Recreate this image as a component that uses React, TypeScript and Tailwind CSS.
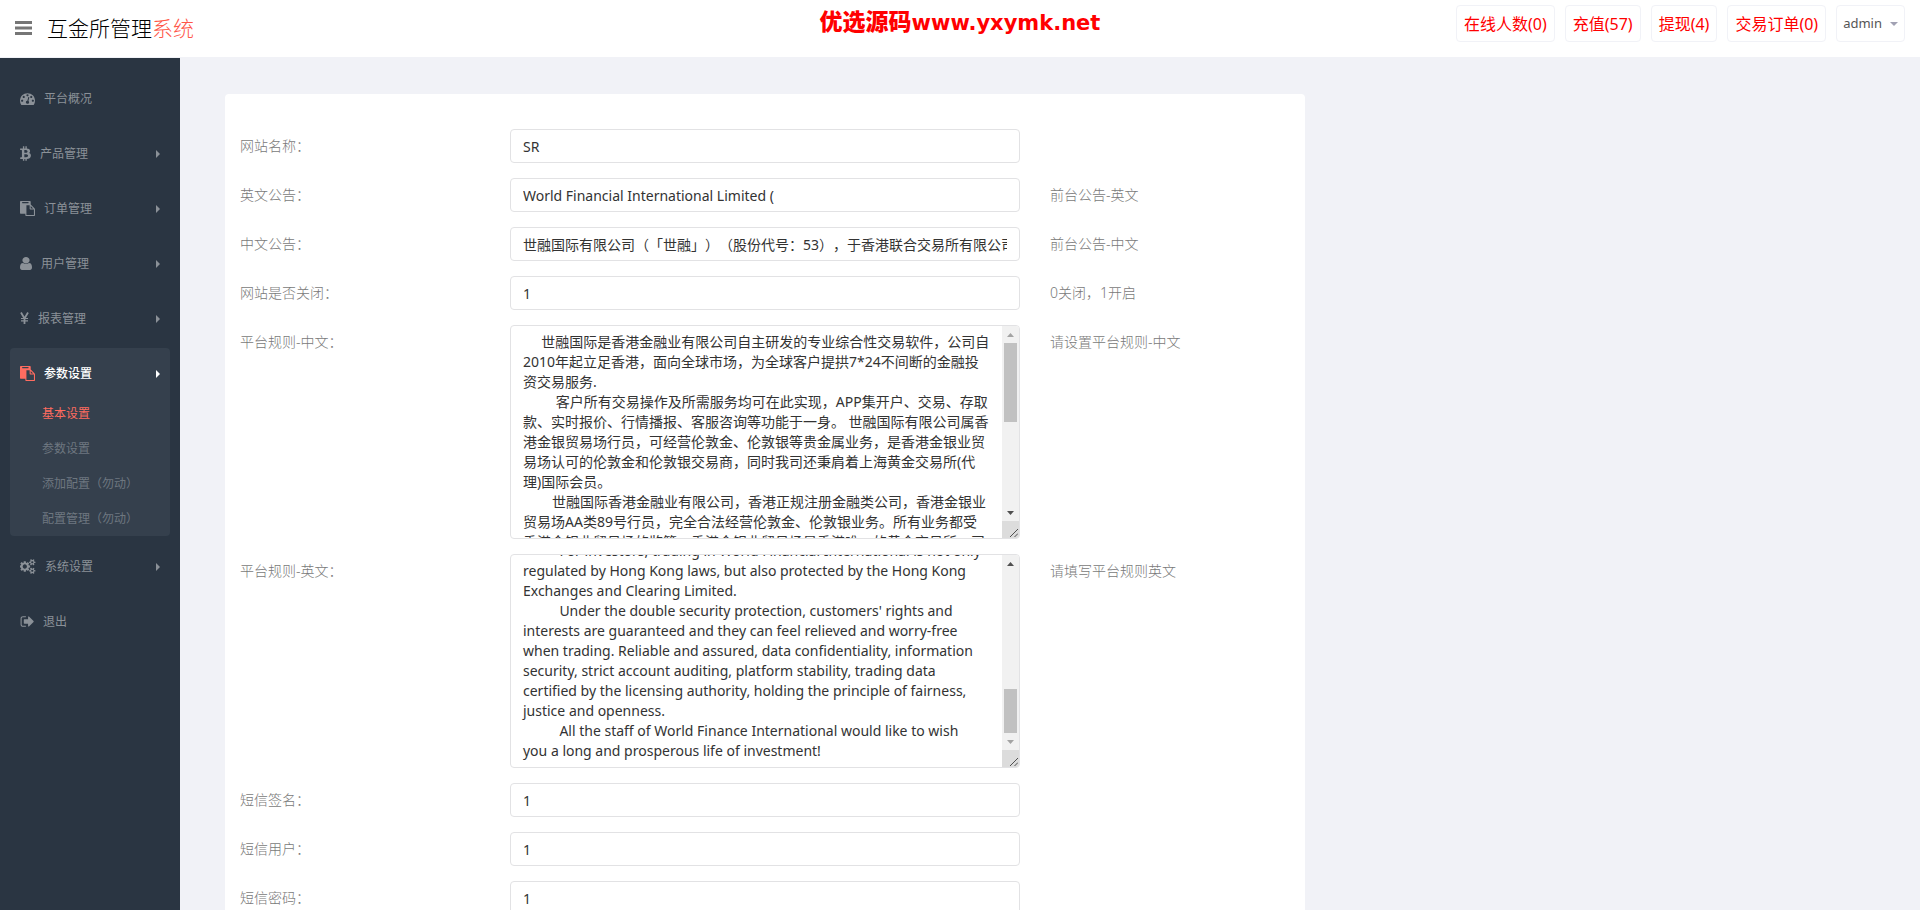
import React, { useEffect, useRef } from 'react';
import { FaBtc } from 'react-icons/fa';

const paths = {
  dashboard:
    'M384 1152q0-53-37.5-90.5t-90.5-37.5-90.5 37.5-37.5 90.5 37.5 90.5 90.5 37.5 90.5-37.5 37.5-90.5zm192-448q0-53-37.5-90.5t-90.5-37.5-90.5 37.5-37.5 90.5 37.5 90.5 90.5 37.5 90.5-37.5 37.5-90.5zm428 481l101-382q6-26-7.5-48.5t-38.5-29.5-48 6.5-30 39.5l-101 382q-60 5-107 43.5t-63 98.5q-20 77 20 146t117 89 146-20 89-117q16-60-6-117t-72-91zm660-33q0-53-37.5-90.5t-90.5-37.5-90.5 37.5-37.5 90.5 37.5 90.5 90.5 37.5 90.5-37.5 37.5-90.5zm-640-640q0-53-37.5-90.5t-90.5-37.5-90.5 37.5-37.5 90.5 37.5 90.5 90.5 37.5 90.5-37.5 37.5-90.5zm448 192q0-53-37.5-90.5t-90.5-37.5-90.5 37.5-37.5 90.5 37.5 90.5 90.5 37.5 90.5-37.5 37.5-90.5zm320 448q0 261-141 483-19 29-54 29h-1402q-35 0-54-29-141-221-141-483 0-182 71-348t191-286 286-191 348-71 348 71 286 191 191 286 71 348z',
  paste:
    'M768 1664h896v-640h-416q-40 0-68-28t-28-68v-416h-384v1152zm256-1440v-64q0-13-9.5-22.5t-22.5-9.5h-704q-13 0-22.5 9.5t-9.5 22.5v64q0 13 9.5 22.5t22.5 9.5h704q13 0 22.5-9.5t9.5-22.5zm256 672h299l-299-299v299zm512 128v672q0 40-28 68t-68 28h-960q-40 0-68-28t-28-68v-160h-544q-40 0-68-28t-28-68v-1344q0-40 28-68t68-28h1088q40 0 68 28t28 68v328q21 13 36 28l408 408q28 28 48 76t20 88z',
  user:
    'M1536 1399q0 109-62.5 187t-150.5 78h-854q-88 0-150.5-78t-62.5-187q0-85 8.5-160.5t31.5-152 58.5-131 94-89 134.5-34.5q131 128 313 128t313-128q76 0 134.5 34.5t94 89 58.5 131 31.5 152 8.5 160.5zm-256-887q0 159-112.5 271.5t-271.5 112.5-271.5-112.5-112.5-271.5 112.5-271.5 271.5-112.5 271.5 112.5 112.5 271.5z',
  signOut:
    'M704 1440q0 4 1 20t.5 26.5-3 23.5-10 19.5-20.5 6.5h-320q-119 0-203.5-84.5t-84.5-203.5v-704q0-119 84.5-203.5t203.5-84.5h320q13 0 22.5 9.5t9.5 22.5q0 4 1 20t.5 26.5-3 23.5-10 19.5-20.5 6.5h-320q-66 0-113 47t-47 113v704q0 66 47 113t113 47h312l11.5 1 11.5 3 8 5.5 7 9 2 13.5zm928-544q0 26-19 45l-544 544q-19 19-45 19t-45-19-19-45v-288h-448q-26 0-45-19t-19-45v-384q0-26 19-45t45-19h448v-288q0-26 19-45t45-19 45 19l544 544q19 19 19 45z',
  cogs:
    'M832 896q0-106-75-181t-181-75-181 75-75 181 75 181 181 75 181-75 75-181zm768 512q0-52-38-90t-90-38-90 38-38 90q0 53 37.5 90.5t90.5 37.5 90.5-37.5 37.5-90.5zm0-1024q0-52-38-90t-90-38-90 38-38 90q0 53 37.5 90.5t90.5 37.5 90.5-37.5 37.5-90.5zm-384 421v185q0 10-7 19.5t-16 10.5l-155 24q-11 35-32 76 34 48 90 115 7 11 7 20 0 12-7 19-23 30-82.5 89.5t-78.5 59.5q-11 0-21-7l-115-90q-37 19-77 31-11 108-23 155-7 24-30 24h-186q-11 0-20-7.5t-10-17.5l-23-153q-34-10-75-31l-118 89q-7 7-20 7-11 0-21-8-144-133-144-160 0-9 7-19 10-14 41-53t47-61q-23-44-35-82l-152-24q-10-1-17-9.5t-7-19.5v-185q0-10 7-19.5t16-10.5l155-24q11-35 32-76-34-48-90-115-7-11-7-20 0-12 7-20 22-30 82-89t79-59q11 0 21 7l115 90q34-18 77-32 11-108 23-154 7-24 30-24h186q11 0 20 7.5t10 17.5l23 153q34 10 75 31l118-89q8-7 20-7 11 0 21 8 144 133 144 160 0 8-7 19-12 16-42 54t-45 60q23 48 34 82l152 23q10 2 17 10.5t7 19.5zm640 533v140q0 16-149 31-12 27-30 52 51 113 51 138 0 4-4 7-122 71-124 71-8 0-46-47t-52-68q-20 2-30 2t-30-2q-14 21-52 68t-46 47q-2 0-124-71-4-3-4-7 0-25 51-138-18-25-30-52-149-15-149-31v-140q0-16 149-31 13-29 30-52-51-113-51-138 0-4 4-7 4-2 35-20t59-34 30-16q8 0 46 46.5t52 67.5q20-2 30-2t30 2q51-71 92-112l6-2q4 0 124 70 4 3 4 7 0 25-51 138 17 23 30 52 149 15 149 31zm0-1024v140q0 16-149 31-12 27-30 52 51 113 51 138 0 4-4 7-122 71-124 71-8 0-46-47t-52-68q-20 2-30 2t-30-2q-14 21-52 68t-46 47q-2 0-124-71-4-3-4-7 0-25 51-138-18-25-30-52-149-15-149-31v-140q0-16 149-31 13-29 30-52-51-113-51-138 0-4 4-7 4-2 35-20t59-34 30-16q8 0 46 46.5t52 67.5q20-2 30-2t30 2q51-71 92-112l6-2q4 0 124 70 4 3 4 7 0 25-51 138 17 23 30 52 149 15 149 31z',
};

function Caret() {
  return (
    <svg className="ml-auto h-2 w-1" viewBox="0 0 4 8" fill="currentColor" aria-hidden="true">
      <path d="M0 0L4 4L0 8Z" />
    </svg>
  );
}

const DashboardIcon = () => (
  <svg className="h-[15px] w-[15px]" viewBox="0 0 1792 1792" fill="currentColor"><path d={paths.dashboard} /></svg>
);
const PasteIcon = () => (
  <svg className="h-[15px] w-[15px]" viewBox="0 0 1792 1792" fill="currentColor"><path d={paths.paste} /></svg>
);
const UserIcon = () => (
  <svg className="h-[15px] w-3" viewBox="256 0 1280 1792" preserveAspectRatio="none" fill="currentColor"><path d={paths.user} /></svg>
);
const SignOutIcon = () => (
  <svg className="h-[15px] w-[14px]" viewBox="0 0 1664 1792" fill="currentColor"><path d={paths.signOut} /></svg>
);
const CogsIcon = () => (
  <svg className="h-[15px] w-4" viewBox="0 0 1920 1792" fill="currentColor"><path d={paths.cogs} /></svg>
);
const BtcIcon = () => <FaBtc className="h-[15px] w-[11px]" />;
const YenIcon = () => (
  <svg className="h-[15px] w-[9px]" viewBox="0 0 9 15" fill="none" stroke="currentColor">
    <path d="M1 1.5L4.5 7.5L8 1.5M4.5 7.5V13" strokeWidth="1.8" />
    <path d="M1 7.5H8M1 9.9H8" strokeWidth="1.1" />
  </svg>
);

type Item = { label: string; icon: () => React.ReactElement; caret?: boolean };

const topItems: Item[] = [
  { label: '平台概况', icon: DashboardIcon },
  { label: '产品管理', icon: BtcIcon, caret: true },
  { label: '订单管理', icon: PasteIcon, caret: true },
  { label: '用户管理', icon: UserIcon, caret: true },
  { label: '报表管理', icon: YenIcon, caret: true },
];
const bottomItems: Item[] = [
  { label: '系统设置', icon: CogsIcon, caret: true },
  { label: '退出', icon: SignOutIcon },
];

function MenuItem({ item }: { item: Item }) {
  const Icon = item.icon;
  return (
    <li>
      <a href="#" className="flex h-[55px] items-center gap-[9px] px-[10px] text-[#8b9198]">
        <Icon />
        <span>{item.label}</span>
        {item.caret && <Caret />}
      </a>
    </li>
  );
}

const subItems = ['基本设置', '参数设置', '添加配置（勿动）', '配置管理（勿动）'];

function Sidebar() {
  return (
    <nav className="w-[180px] shrink-0 bg-[#2a3542] px-[10px] pt-[13px] text-xs">
      <ul>
        {topItems.map((i) => (
          <MenuItem key={i.label} item={i} />
        ))}
        <li className="mt-[2px] mb-[3px] rounded bg-[#35404d]">
          <a href="#" className="flex h-12 items-center gap-[9px] px-[10px] pt-[3px] font-medium text-white">
            <span className="text-[#ff6c60]"><PasteIcon /></span>
            <span>参数设置</span>
            <Caret />
          </a>
          <ul>
            {subItems.map((s, n) => (
              <li key={s}>
                <a
                  href="#"
                  className={
                    n === 0
                      ? 'flex h-[35px] items-center pl-8 text-[#ff6c60]'
                      : 'flex h-[35px] items-center pl-8 text-[#6e7780]'
                  }
                >
                  {s}
                </a>
              </li>
            ))}
          </ul>
        </li>
        {bottomItems.map((i) => (
          <MenuItem key={i.label} item={i} />
        ))}
      </ul>
    </nav>
  );
}

const counters = ['在线人数(0)', '充值(57)', '提现(4)', '交易订单(0)'];

function Header() {
  return (
    <header className="grid h-[58px] grid-cols-[1fr_auto_1fr] items-start border-b border-[#f1f2f7] bg-white">
      <div className="flex h-14 items-center gap-[15px] pl-[15px]">
        <button type="button" aria-label="菜单" className="text-[#767676]">
          <svg className="h-[14px] w-[17px]" viewBox="0 0 17 14" fill="currentColor">
            <path d="M0 0H17V3H0ZM0 5.5H17V8.5H0ZM0 11H17V14H0Z" />
          </svg>
        </button>
        <a href="#" className="text-[21px] leading-7 font-light text-black">
          互金所管理<span className="text-[#ff5648]">系统</span>
        </a>
      </div>
      <p className="pt-[7px] text-[23px] leading-7 font-black text-[#f00]">
        优选源码<span className="font-['DejaVu_Sans'] text-[21px] font-bold">www.yxymk.net</span>
      </p>
      <div className="flex justify-end gap-[10px] pt-[5px] pr-[15px]">
        {counters.map((c) => (
          <a
            key={c}
            href="#"
            className="flex h-[37px] items-center rounded border border-[#f1f2f7] px-[7px] text-base leading-5 text-[#f00]"
          >
            {c}
          </a>
        ))}
        <button
          type="button"
          className="flex h-[37px] items-center gap-2 rounded border border-[#f1f2f7] px-[6px] text-[13px] text-[#555]"
        >
          admin
          <svg className="h-1 w-2 text-[#a1a1b3]" viewBox="0 0 8 4" fill="currentColor">
            <path d="M0 0H8L4 4Z" />
          </svg>
        </button>
      </div>
    </header>
  );
}

const inputClass =
  'h-[34px] w-full rounded border border-[#e2e2e4] bg-white px-3 text-sm text-[#333] outline-none';

function Row({ id, label, help, children }: { id: string; label: string; help?: string; children: React.ReactNode }) {
  return (
    <div className="grid grid-cols-[1fr_2fr_1fr] text-sm leading-5 font-light text-[#797979]">
      <label htmlFor={id} className="pt-[7px] pl-[15px]">{label}</label>
      <div className="px-[15px] font-normal">{children}</div>
      <p className="pt-[7px] pl-[15px]">{help}</p>
    </div>
  );
}

function ScrollArrow({ up, dim }: { up?: boolean; dim?: boolean }) {
  return (
    <span className={dim ? 'flex h-[17px] items-center justify-center text-[#a3a3a3]' : 'flex h-[17px] items-center justify-center text-[#505050]'}>
      <svg className="h-1 w-[7px]" viewBox="0 0 7 4" fill="currentColor">
        <path d={up ? 'M0 4H7L3.5 0Z' : 'M0 0H7L3.5 4Z'} />
      </svg>
    </span>
  );
}

function ScrollArea({ id, text, atEnd }: { id: string; text: string; atEnd?: boolean }) {
  const ref = useRef<HTMLTextAreaElement>(null);
  useEffect(() => {
    if (ref.current) ref.current.scrollTop = atEnd ? ref.current.scrollHeight : 0;
  }, [atEnd]);
  return (
    <div className="flex h-[214px] overflow-hidden rounded border border-[#e2e2e4] bg-white">
      <textarea
        id={id}
        ref={ref}
        defaultValue={text}
        wrap="off"
        className="block min-w-0 flex-1 resize-none overflow-hidden py-[6px] pl-3 text-sm leading-5 whitespace-pre text-[#333] outline-none"
      />
      <div className="flex w-[17px] flex-col bg-[#f1f1f1]" aria-hidden="true">
        <ScrollArrow up dim={!atEnd} />
        <div className={atEnd ? 'flex flex-1 flex-col justify-end px-[2px]' : 'flex flex-1 flex-col px-[2px]'}>
          <div className={atEnd ? 'h-11 bg-[#c1c1c1]' : 'h-[79px] bg-[#c1c1c1]'} />
        </div>
        <ScrollArrow dim={atEnd} />
        <div className="flex h-[17px] items-end justify-end bg-[#dcdcdc] p-[1px]">
          <svg className="h-2 w-2" viewBox="0 0 8 8" fill="none" stroke="#505050">
            <path d="M0 8L8 0M4.5 8L8 4.5" />
          </svg>
        </div>
      </div>
    </div>
  );
}

const rulesZh = [
  '     世融国际是香港金融业有限公司自主研发的专业综合性交易软件，公司自',
  '2010年起立足香港，面向全球市场，为全球客户提拱7*24不间断的金融投',
  '资交易服务.',
  '         客户所有交易操作及所需服务均可在此实现，APP集开户、交易、存取',
  '款、实时报价、行情播报、客服咨询等功能于一身。 世融国际有限公司属香',
  '港金银贸易场行员，可经营伦敦金、伦敦银等贵金属业务，是香港金银业贸',
  '易场认可的伦敦金和伦敦银交易商，同时我司还秉肩着上海黄金交易所(代',
  '理)国际会员。',
  '        世融国际香港金融业有限公司，香港正规注册金融类公司，香港金银业',
  '贸易场AA类89号行员，完全合法经营伦敦金、伦敦银业务。所有业务都受',
  '香港金银业贸易场的监管，香港金银业贸易场是香港唯一的黄金交易所，司',
].join('\n');

const rulesEn = [
  '          For investors, trading in World Financial International is not only',
  'regulated by Hong Kong laws, but also protected by the Hong Kong',
  'Exchanges and Clearing Limited.',
  "          Under the double security protection, customers' rights and",
  'interests are guaranteed and they can feel relieved and worry-free',
  'when trading. Reliable and assured, data confidentiality, information',
  'security, strict account auditing, platform stability, trading data',
  'certified by the licensing authority, holding the principle of fairness,',
  'justice and openness.',
  '          All the staff of World Finance International would like to wish',
  'you a long and prosperous life of investment!',
].join('\n');

function SettingsForm() {
  return (
    <form className="flex w-2/3 flex-col gap-[15px] rounded-t bg-white pt-[35px]">
      <Row id="name" label="网站名称：">
        <input id="name" className={inputClass} defaultValue="SR" />
      </Row>
      <Row id="notice-en" label="英文公告：" help="前台公告-英文">
        <input id="notice-en" className={inputClass} defaultValue="World Financial International Limited (" />
      </Row>
      <Row id="notice-zh" label="中文公告：" help="前台公告-中文">
        <input
          id="notice-zh"
          className={inputClass}
          defaultValue="世融国际有限公司（「世融」）（股份代号：53），于香港联合交易所有限公司"
        />
      </Row>
      <Row id="open" label="网站是否关闭：" help="0关闭，1开启">
        <input id="open" className={inputClass} defaultValue="1" />
      </Row>
      <Row id="rules-zh" label="平台规则-中文：" help="请设置平台规则-中文">
        <ScrollArea id="rules-zh" text={rulesZh} />
      </Row>
      <Row id="rules-en" label="平台规则-英文：" help="请填写平台规则英文">
        <ScrollArea id="rules-en" text={rulesEn} atEnd />
      </Row>
      <Row id="sms-sign" label="短信签名：">
        <input id="sms-sign" className={inputClass} defaultValue="1" />
      </Row>
      <Row id="sms-user" label="短信用户：">
        <input id="sms-user" className={inputClass} defaultValue="1" />
      </Row>
      <Row id="sms-pass" label="短信密码：">
        <input id="sms-pass" className={inputClass} defaultValue="1" />
      </Row>
    </form>
  );
}

export default function App() {
  return (
    <div className="flex h-screen flex-col overflow-hidden bg-[#f1f2f7] font-['Noto_Sans','Noto_Sans_CJK_SC',sans-serif] [text-spacing-trim:space-all]">
      <Header />
      <div className="flex min-h-0 flex-1">
        <Sidebar />
        <main className="min-w-0 flex-1 overflow-hidden pt-9 pr-[75px] pl-[45px]">
          <SettingsForm />
        </main>
      </div>
    </div>
  );
}
